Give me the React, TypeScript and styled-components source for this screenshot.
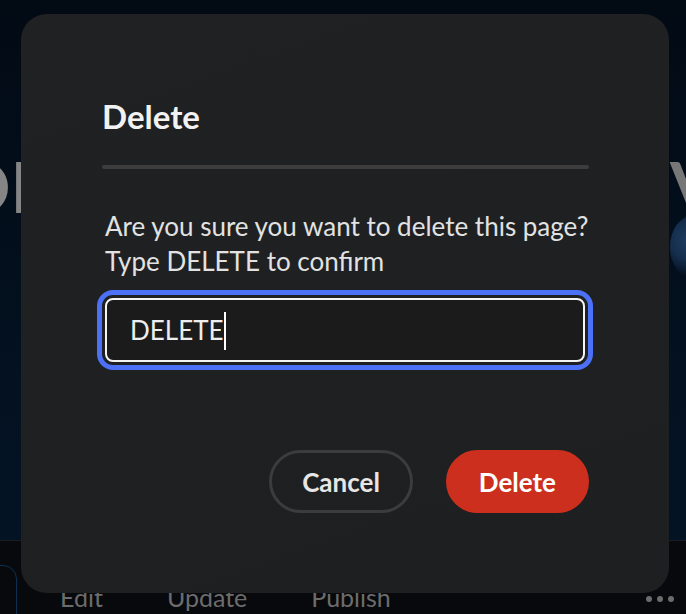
import React from "react";
import styled, { createGlobalStyle } from "styled-components";

const Global = createGlobalStyle`
  html, body {
    margin: 0;
    padding: 0;
    background: #020b16;
    font-family: Lato, "Open Sans", sans-serif;
    overflow: hidden;
  }
  * { box-sizing: border-box; }
`;

const Page = styled.div`
  position: relative;
  width: 686px;
  height: 614px;
  overflow: hidden;
  display: flex;
  flex-direction: column;
  background: linear-gradient(180deg, #020a14 0%, #031120 60%, #041426 100%);
`;

const Hero = styled.section`
  height: 540px;
  flex-shrink: 0;
  padding-top: 151px;
  overflow: hidden;
`;

const HeroRow = styled.div`
  display: flex;
  align-items: flex-start;
  white-space: nowrap;
`;

const HeroWord = styled.span`
  font-size: 70px;
  line-height: 70px;
  font-weight: 700;
  color: #858585;
  margin-left: -46px;
`;

const Spacer = styled.div`
  flex: 1;
`;

const HeroSide = styled.div`
  width: 16px;
  flex-shrink: 0;
  display: flex;
  flex-direction: column;
  overflow: visible;
`;

const HeroSideWord = styled.span`
  font-size: 70px;
  line-height: 70px;
  font-weight: 700;
  color: #777;
`;

const Blob = styled.div`
  width: 48px;
  height: 64px;
  margin-top: -6px;
  margin-left: 0px;
  border-radius: 50%;
  background: radial-gradient(circle at 40% 40%, #24466f 0%, #173354 40%, rgba(4, 20, 38, 0) 75%);
  opacity: 0.85;
`;

const BottomNav = styled.nav`
  flex: 1;
  display: flex;
  align-items: flex-start;
  border-top: 1px solid #1a1f27;
  background: #08090c;
`;

const NavTab = styled.div`
  width: 60px;
  height: 70px;
  margin-top: 24px;
  margin-left: -43px;
  border: 1.5px solid #0c3150;
  border-radius: 14px;
  flex-shrink: 0;
`;

const NavLabels = styled.div`
  display: flex;
  gap: 64px;
  margin-top: 41px;
  margin-left: 43px;
`;

const NavLabel = styled.span`
  font-size: 25px;
  line-height: 30px;
  color: #6c6c6c;
`;

const NavDots = styled.div`
  margin-left: auto;
  margin-right: 12px;
  margin-top: 55px;
  display: flex;
  gap: 5px;
`;

const Dot = styled.span`
  width: 6px;
  height: 6px;
  border-radius: 50%;
  background: #6c6c6c;
`;

const Overlay = styled.div`
  position: fixed;
  inset: 0;
  display: flex;
  align-items: flex-start;
  padding: 14px 0 0 21px;
`;

const Dialog = styled.div`
  width: 648px;
  padding: 80px 80px 80px 81px;
  border-radius: 26px;
  background: linear-gradient(160deg, #202122 0%, #1e1f20 100%);
  display: flex;
  flex-direction: column;
`;

const Title = styled.h2`
  margin: 0;
  font-size: 33px;
  line-height: 44px;
  font-weight: 700;
  color: #f2f2f2;
`;

const Divider = styled.hr`
  margin: 27px 0 0;
  height: 4px;
  border: none;
  border-radius: 2px;
  background: #3d3d3d;
`;

const Body = styled.p`
  margin: 40px 0 0 3px;
  font-size: 26px;
  line-height: 35px;
  color: #e2e2e2;
`;

const Field = styled.div`
  margin: 19px 4px 0 3px;
  height: 64px;
  display: flex;
  align-items: center;
  padding: 0 23px;
  border: 2px solid #f4f4f4;
  border-radius: 8px;
  background: #1b1b1b;
  box-shadow: 0 0 0 3px #1f2021, 0 0 0 8px #4c71f6;
`;

const FieldText = styled.span`
  font-size: 26px;
  line-height: 30px;
  color: #eeeeee;
`;

const Caret = styled.span`
  width: 2px;
  height: 38px;
  background: #ffffff;
  margin-top: 2px;
`;

const Actions = styled.div`
  margin-top: 88px;
  display: flex;
  justify-content: flex-end;
  gap: 33px;
`;

const Button = styled.button<{ $variant: "secondary" | "negative" }>`
  height: 63px;
  padding: 0 30px;
  border-radius: 32px;
  border: 3px solid ${(p) => (p.$variant === "negative" ? "#cc2f1d" : "#3c3c3c")};
  background: ${(p) => (p.$variant === "negative" ? "#cc2f1d" : "transparent")};
  color: ${(p) => (p.$variant === "negative" ? "#ffffff" : "#e6e6e6")};
  font-family: Lato, "Open Sans", sans-serif;
  font-size: 26px;
  font-weight: 700;
  line-height: 1;
  cursor: pointer;
`;

export default function App() {
  return (
    <>
      <Global />
      <Page>
        <Hero>
          <HeroRow>
            <HeroWord>OP</HeroWord>
            <Spacer />
            <HeroSide>
              <HeroSideWord>V</HeroSideWord>
              <Blob />
            </HeroSide>
          </HeroRow>
        </Hero>
        <BottomNav>
          <NavTab />
          <NavLabels>
            <NavLabel>Edit</NavLabel>
            <NavLabel>Update</NavLabel>
            <NavLabel>Publish</NavLabel>
          </NavLabels>
          <NavDots>
            <Dot />
            <Dot />
            <Dot />
          </NavDots>
        </BottomNav>
        <Overlay>
          <Dialog role="dialog" aria-labelledby="dlg-title">
            <Title id="dlg-title">Delete</Title>
            <Divider />
            <Body>
              Are you sure you want to delete this page?
              <br />
              Type DELETE to confirm
            </Body>
            <Field role="textbox">
              <FieldText>DELETE</FieldText>
              <Caret />
            </Field>
            <Actions>
              <Button $variant="secondary">Cancel</Button>
              <Button $variant="negative">Delete</Button>
            </Actions>
          </Dialog>
        </Overlay>
      </Page>
    </>
  );
}
